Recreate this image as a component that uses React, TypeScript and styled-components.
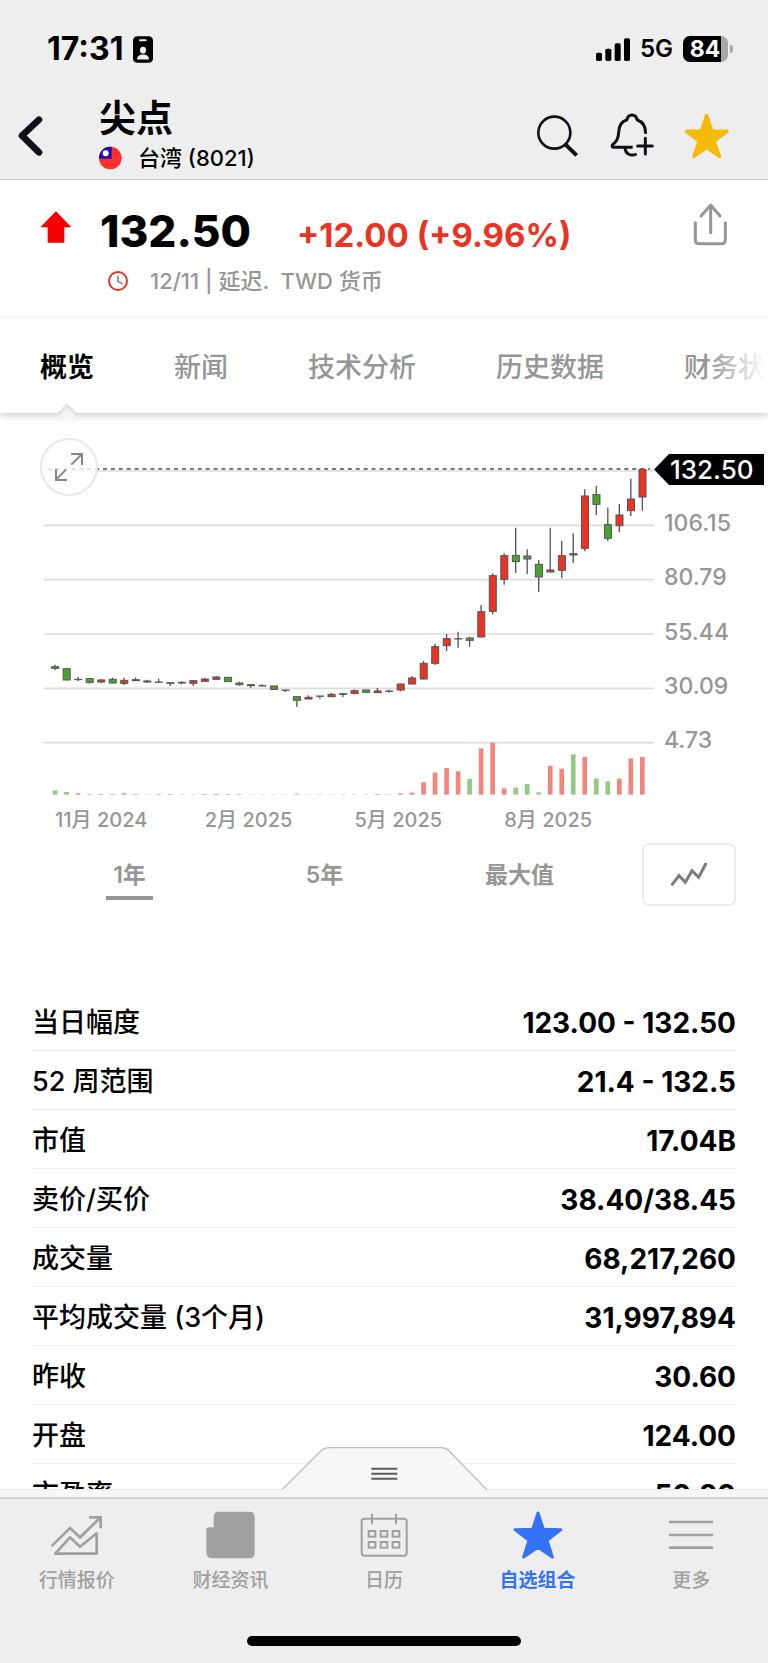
import React from 'react';
import styled, { createGlobalStyle } from 'styled-components';

const GlobalStyle = createGlobalStyle`
  *, *::before, *::after { box-sizing: border-box; }
  body {
    margin: 0;
    background: #fff;
    color: #000;
    font-family: Inter, "Noto Sans CJK SC", sans-serif;
  }
  button {
    margin: 0;
    padding: 0;
    border: 0;
    background: none;
    color: inherit;
    font: inherit;
    cursor: pointer;
  }
  svg { display: block; flex: none; }
`;

const UP = '#ea3323';
const DOWN = '#4aa32c';
const MUTED = '#969696';

const Screen = styled.div`
  display: flex;
  flex-direction: column;
  height: 100vh;
  overflow: hidden;
`;

/* ---------- header ---------- */

const Header = styled.header`
  flex: none;
  background: #eee;
  border-bottom: 1px solid #c8c8c8;
`;

const StatusBar = styled.div`
  display: flex;
  align-items: center;
  justify-content: space-between;
  height: 98px;
  padding: 0 35px 0 47px;
`;

const StatusGroup = styled.div<{ $gap: number }>`
  display: flex;
  align-items: center;
  gap: ${(p) => p.$gap}px;
`;

const Clock = styled.span`
  font-size: 32px;
  font-weight: 700;
  line-height: 36px;
`;

const Network = styled.span`
  font-size: 24px;
  font-weight: 600;
  line-height: 28px;
`;

const Battery = styled.span`
  display: flex;
  align-items: center;
  justify-content: center;
  position: relative;
  width: 45px;
  height: 26px;
  margin-right: 5px;
  padding-right: 1px;
  border-radius: 7px;
  background: linear-gradient(to right, #000 84%, #a8a8a8 84%);
  color: #fff;
  font-size: 23px;
  font-weight: 700;
  line-height: 26px;

  &::after {
    content: '';
    position: absolute;
    top: 9px;
    right: -5px;
    width: 3px;
    height: 8px;
    border-radius: 0 4px 4px 0;
    background: #a8a8a8;
  }
`;

const TitleBar = styled.div`
  display: flex;
  align-items: center;
  padding: 0 38px 6px 18px;
`;

const TitleBlock = styled.div`
  flex: 1;
  display: flex;
  flex-direction: column;
  gap: 6px;
  padding: 1px 0 2px 56px;
`;

const Title = styled.h1`
  margin: 0;
  font-size: 37px;
  font-weight: 700;
  line-height: 40px;
`;

const Subtitle = styled.div`
  display: flex;
  align-items: center;
  gap: 16px;
  font-size: 22px;
  font-weight: 500;
  line-height: 26px;
`;

const Actions = styled.div`
  display: flex;
  align-items: center;
  gap: 30px;
`;

/* ---------- quote ---------- */

const Quote = styled.section`
  flex: none;
  display: flex;
  align-items: flex-start;
  height: 138px;
  padding: 22px 40px 0;
  border-bottom: 2px solid #f5f5f5;
`;

const ArrowSlot = styled.span`
  padding-top: 9px;
`;

const QuoteText = styled.div`
  flex: 1;
  display: flex;
  flex-direction: column;
  gap: 6px;
  padding: 3px 0 0 28px;
`;

const PriceRow = styled.div`
  display: flex;
  align-items: baseline;
  gap: 46px;
  line-height: 52px;
`;

const Price = styled.strong`
  font-size: 44px;
  font-weight: 800;
`;

const Change = styled.span`
  color: ${UP};
  font-size: 33px;
  font-weight: 700;
`;

const Meta = styled.div`
  display: flex;
  align-items: center;
  gap: 22px;
  padding-left: 8px;
  color: ${MUTED};
  font-size: 22px;
  font-weight: 500;
  line-height: 28px;
  white-space: pre;
`;

/* ---------- section tabs ---------- */

const Tabs = styled.nav`
  flex: none;
  position: relative;
  z-index: 1;
  display: flex;
  gap: 80px;
  height: 95px;
  padding: 5px 0 0 40px;
  background: #fff;
  box-shadow: 0 2px 8px rgba(0, 0, 0, 0.22);
  clip-path: inset(0 0 -12px 0);
`;

const TabsFade = styled.span`
  position: absolute;
  top: 0;
  right: 0;
  width: 60px;
  height: 93px;
  background: linear-gradient(to right, rgba(255, 255, 255, 0), #fff 96%);
  pointer-events: none;
`;

const Tab = styled.button<{ $active?: boolean }>`
  flex: none;
  position: relative;
  color: ${(p) => (p.$active ? '#000' : MUTED)};
  font-size: 27px;
  font-weight: ${(p) => (p.$active ? 700 : 500)};
  line-height: 36px;
`;

const TabNotch = styled.svg`
  position: absolute;
  left: 50%;
  bottom: -6px;
  margin-left: -9px;
`;

/* ---------- chart ---------- */

const Body = styled.main`
  flex: 1;
  min-height: 0;
  overflow-y: auto;
  scrollbar-width: none;
`;

const ChartArea = styled.section`
  position: relative;
  display: grid;
  grid-template-columns: minmax(0, 1fr) 114px;
  padding-top: 25px;
`;

const Plot = styled.svg`
  width: 100%;
  height: auto;
`;

const Expand = styled.button`
  position: absolute;
  top: 25px;
  left: 40px;
  display: flex;
  align-items: center;
  justify-content: center;
  width: 58px;
  height: 58px;
  border: 2px solid #e8e8e8;
  border-radius: 50%;
  background: rgba(255, 255, 255, 0.8);
`;

const PriceAxis = styled.div`
  display: flex;
  flex-direction: column;
  justify-content: space-between;
  height: 302px;
  margin: 16px 4px 0 0;
  color: ${MUTED};
  font-size: 23px;
  font-weight: 500;
  line-height: 31px;
`;

const AxisPrice = styled.span`
  padding-left: 10px;
`;

const CurrentPrice = styled.span`
  padding-left: 16px;
  background: #000;
  color: #fff;
  font-size: 26px;
  clip-path: polygon(0 50%, 15px 0, 100% 0, 100% 100%, 15px 100%);
`;

const TimeAxis = styled.div`
  display: grid;
  grid-template-columns: repeat(4, 1fr);
  padding: 8px 114px 0 55px;
  color: ${MUTED};
  font-size: 20px;
  font-weight: 500;
  line-height: 28px;
`;

const PeriodBar = styled.div`
  display: flex;
  align-items: center;
  padding: 9px 32px 0;
`;

const Periods = styled.div`
  flex: 1;
  display: grid;
  grid-template-columns: repeat(3, 1fr);
  justify-items: center;
  padding-right: 25px;
`;

const Period = styled.button<{ $active?: boolean }>`
  padding: 7px 7px 3px;
  border-bottom: 4px solid ${(p) => (p.$active ? MUTED : 'transparent')};
  color: ${MUTED};
  font-size: 23px;
  font-weight: 600;
  line-height: 36px;
`;

const ChartType = styled.button`
  display: flex;
  align-items: center;
  justify-content: center;
  width: 94px;
  height: 63px;
  border: 2px solid #ececec;
  border-radius: 7px;
`;

/* ---------- key figures ---------- */

const Figures = styled.table`
  width: calc(100% - 64px);
  margin: 86px 32px 0;
  border-collapse: separate;
  border-spacing: 0;

  th, td {
    height: 59px;
    padding: 3px 0 0;
    border-bottom: 1px solid #efefef;
    line-height: 36px;
  }
  th { font-size: 27px; font-weight: 500; text-align: left; }
  td { font-size: 28px; font-weight: 700; text-align: right; }
`;

/* ---------- bottom ---------- */

const Drawer = styled.div`
  flex: none;
  position: relative;
  height: 8px;
  background: #f7f7f7;
  border-top: 1px solid #e6e6e6;
`;

const DrawerHandle = styled.button`
  position: absolute;
  left: 50%;
  bottom: 7px;
  margin-left: -102px;
`;

const BottomBar = styled.footer`
  flex: none;
  display: flex;
  flex-direction: column;
  align-items: center;
  justify-content: space-between;
  height: 166px;
  padding: 12px 0 17px;
  border-top: 2px solid #d2d2d2;
  background: #eee;
`;

const NavList = styled.nav`
  display: grid;
  grid-template-columns: repeat(5, 1fr);
  width: 100%;
`;

const NavLink = styled.a<{ $active?: boolean }>`
  display: flex;
  flex-direction: column;
  align-items: center;
  gap: 10px;
  color: ${(p) => (p.$active ? '#3573f6' : '#a0a0a0')};
  font-size: 19px;
  font-weight: ${(p) => (p.$active ? 700 : 500)};
  line-height: 24px;
  text-decoration: none;
`;

const NavIcon = styled.span`
  display: flex;
  align-items: center;
  height: 48px;
`;

const HomeIndicator = styled.div`
  width: 274px;
  height: 10px;
  border-radius: 5px;
  background: #000;
`;

/* ---------- chart data, in the units of the plot's view box ---------- */

type Mark = 'u' | 'd';

// [direction, body top, body bottom, wick top, wick bottom]
const candles: [Mark, number, number, number, number][] = [
  ['d', 739, 746, 734, 750],
  ['d', 745, 781, 745, 781],
  ['d', 777, 780, 771, 783],
  ['d', 775, 788, 775, 791],
  ['u', 779, 787, 777, 790],
  ['d', 777, 790, 773, 790],
  ['u', 780, 791, 773, 795],
  ['d', 778, 783, 772, 783],
  ['d', 782, 787, 779, 789],
  ['d', 785, 788, 776, 788],
  ['d', 787, 791, 787, 798],
  ['d', 786, 790, 784, 793],
  ['u', 781, 791, 781, 798],
  ['u', 776, 785, 774, 785],
  ['u', 770, 779, 768, 779],
  ['d', 771, 786, 771, 786],
  ['d', 788, 795, 785, 797],
  ['d', 793, 798, 793, 803],
  ['d', 796, 799, 793, 799],
  ['d', 797, 809, 797, 809],
  ['d', 809, 812, 809, 816],
  ['d', 829, 842, 829, 861],
  ['u', 831, 838, 826, 838],
  ['d', 827, 830, 827, 836],
  ['u', 822, 831, 819, 831],
  ['d', 820, 824, 820, 831],
  ['u', 811, 822, 808, 822],
  ['d', 809, 818, 809, 818],
  ['u', 812, 819, 804, 819],
  ['d', 812, 815, 809, 818],
  ['u', 791, 811, 791, 814],
  ['u', 773, 793, 768, 793],
  ['u', 729, 778, 723, 778],
  ['u', 679, 731, 671, 735],
  ['u', 655, 678, 642, 693],
  ['u', 655, 656, 635, 683],
  ['d', 653, 662, 650, 680],
  ['u', 574, 652, 555, 652],
  ['u', 466, 575, 460, 583],
  ['u', 406, 479, 400, 494],
  ['d', 405, 426, 323, 458],
  ['d', 407, 418, 388, 462],
  ['d', 432, 472, 421, 516],
  ['u', 449, 457, 323, 457],
  ['u', 406, 452, 363, 475],
  ['d', 400, 406, 340, 429],
  ['u', 227, 386, 208, 394],
  ['d', 223, 254, 198, 285],
  ['d', 313, 356, 263, 364],
  ['u', 284, 318, 252, 336],
  ['u', 236, 273, 176, 288],
  ['u', 147, 232, 147, 272],
];

const volumes: [Mark, number][] = [
  ['d', 13], ['d', 8], ['u', 4], ['d', 2], ['u', 2], ['d', 2], ['u', 4], ['d', 2], ['d', 1],
  ['d', 2], ['d', 2], ['u', 1], ['u', 1], ['u', 2], ['u', 2], ['d', 2], ['d', 2], ['d', 1],
  ['d', 1], ['d', 1], ['d', 1], ['d', 3], ['u', 1], ['u', 1], ['u', 1], ['u', 1], ['u', 1],
  ['d', 1], ['u', 2], ['u', 1], ['u', 4], ['u', 6], ['u', 37], ['u', 66], ['u', 80], ['u', 70],
  ['d', 47], ['u', 139], ['u', 156], ['u', 19], ['d', 21], ['d', 32], ['d', 7], ['u', 87],
  ['u', 78], ['d', 121], ['u', 113], ['d', 48], ['d', 40], ['u', 48], ['u', 109], ['u', 113],
];

const gridLines = [153, 316, 479, 642, 805, 968];
const FIRST_X = 165;
const STEP = 34.55;
const VOLUME_BASE = 1124;

const figures: [string, string][] = [
  ['当日幅度', '123.00 - 132.50'],
  ['52 周范围', '21.4 - 132.5'],
  ['市值', '17.04B'],
  ['卖价/买价', '38.40/38.45'],
  ['成交量', '68,217,260'],
  ['平均成交量 (3个月)', '31,997,894'],
  ['昨收', '30.60'],
  ['开盘', '124.00'],
  ['市盈率', '50.80'],
];

function CandlePlot() {
  return (
    <Plot viewBox="0 54 1962 1080" role="img" aria-label="一年价格走势">
      {gridLines.map((y) => (
        <line key={y} x1="131" x2="1962" y1={y} y2={y} stroke="#dcdcdc" strokeWidth="5" />
      ))}
      <line x1="143" x2="1950" y1="147" y2="147" stroke="#777" strokeWidth="6" strokeDasharray="12 11.7" />
      {volumes.map(([mark, h], i) => (
        <rect
          key={i}
          x={FIRST_X + i * STEP - 7}
          y={VOLUME_BASE - h}
          width="14"
          height={h}
          fill={mark === 'u' ? '#f4857b' : '#92c983'}
        />
      ))}
      {candles.map(([mark, top, bottom, high, low], i) => {
        const x = FIRST_X + i * STEP;
        return (
          <g key={i} stroke="#555" strokeWidth="3">
            <line x1={x} x2={x} y1={high} y2={low} strokeWidth="4" />
            <rect
              x={x - 10}
              y={top + 1}
              width="21"
              height={Math.max(1, bottom - top - 2)}
              fill={mark === 'u' ? UP : DOWN}
            />
          </g>
        );
      })}
    </Plot>
  );
}

export default function App() {
  return (
    <>
      <GlobalStyle />
      <Screen>
        <Header>
          <StatusBar>
            <StatusGroup $gap={10}>
              <Clock>17:31</Clock>
              <svg width="20" height="27" viewBox="408 108 60 80" aria-hidden="true">
                <rect x="408" y="108" width="60" height="80" rx="13" />
                <rect x="426" y="117" width="23" height="6" rx="3" fill="#eee" />
                <ellipse cx="438" cy="150" rx="9" ry="10" fill="#eee" />
                <path d="M420 178 C420 166 430 163 438 163 C446 163 456 166 456 178 Z" fill="#eee" />
              </svg>
            </StatusGroup>
            <StatusGroup $gap={10}>
              <svg width="34" height="23" viewBox="633 112 102 69" aria-hidden="true">
                <rect x="633" y="156" width="18" height="25" rx="5" />
                <rect x="661" y="144" width="18" height="37" rx="5" />
                <rect x="689" y="128" width="18" height="53" rx="5" />
                <rect x="717" y="113" width="18" height="68" rx="5" />
              </svg>
              <Network>5G</Network>
              <Battery>84</Battery>
            </StatusGroup>
          </StatusBar>
          <TitleBar>
            <button aria-label="返回">
              <svg width="25" height="42" viewBox="54 346 75 126" fill="none" stroke="#0e1118" strokeWidth="20" strokeLinecap="round" strokeLinejoin="round">
                <path d="M117 360 L66 408 L117 458" />
              </svg>
            </button>
            <TitleBlock>
              <Title>尖点</Title>
              <Subtitle>
                <svg width="23" height="24" viewBox="297 437 69 72" aria-hidden="true">
                  <clipPath id="flag"><circle cx="331" cy="473" r="34" /></clipPath>
                  <g clipPath="url(#flag)">
                    <rect x="297" y="437" width="69" height="72" fill="#ff2d2d" />
                    <rect x="297" y="437" width="38" height="38" fill="#1a0cb4" />
                    <circle cx="317" cy="459" r="9" fill="#fff" />
                  </g>
                </svg>
                台湾 (8021)
              </Subtitle>
            </TitleBlock>
            <Actions>
              <button aria-label="搜索">
                <svg width="42" height="42" viewBox="458 342 126 126" fill="none" stroke="#0e1118">
                  <circle cx="510" cy="395" r="48" strokeWidth="8" />
                  <path d="M543 430 L577 463" strokeWidth="12" />
                </svg>
              </button>
              <button aria-label="添加提醒">
                <svg width="45" height="45" viewBox="676 340 135 135" fill="none" stroke="#0e1118" strokeWidth="9" strokeLinecap="butt" strokeLinejoin="round">
                  <path d="M747 443 H689 Q684 442 686 436 C697 427 704 420 705 398 C706 378 713 365 729 361 C732 349 738 346 745 346 C752 346 758 349 761 361 C779 367 786 380 786 402" />
                  <path d="M724 445 C725 463 741 471 759 463" />
                  <path d="M785 416 V463 M762 439 H806" strokeLinecap="round" />
                </svg>
              </button>
              <button aria-label="移出自选">
                <svg width="46" height="46" viewBox="900 337 138 138" fill="#f4bb0c" stroke="#f4bb0c" strokeWidth="11" strokeLinejoin="round">
                  <path d="M968 345 L983 391 L1029 392 L990 421 L1006 467 L968 440 L930 467 L946 421 L908 392 L953 391 Z" />
                </svg>
              </button>
            </Actions>
          </TitleBar>
        </Header>

        <Quote>
          <ArrowSlot>
            <svg width="32" height="33" viewBox="118 92 96 99" fill="#f30000" role="img" aria-label="上涨">
              <path d="M166 93 L212 141 H191 V187 H141 V141 H119 Z" />
            </svg>
          </ArrowSlot>
          <QuoteText>
            <PriceRow>
              <Price>132.50</Price>
              <Change>+12.00 (+9.96%)</Change>
            </PriceRow>
            <Meta>
              <svg width="20" height="20" viewBox="324 270 60 60" fill="none" strokeWidth="6" aria-hidden="true">
                <circle cx="354" cy="300" r="27" stroke={UP} />
                <path d="M354 284 V301 L368 309" stroke="#999" />
              </svg>
              <span>12/11 | 延迟.  TWD 货币</span>
            </Meta>
          </QuoteText>
          <button aria-label="分享">
            <svg width="35" height="44" viewBox="928 66 105 132" fill="none" stroke={MUTED} strokeWidth="9" strokeLinecap="round" strokeLinejoin="round">
              <path d="M981 76 V158 M952 108 L981 75 L1009 108" />
              <path d="M935 128 V179 Q935 191 947 191 H1013 Q1025 191 1025 179 V128" />
            </svg>
          </button>
        </Quote>

        <Tabs aria-label="栏目">
          <Tab $active>
            概览
            <TabNotch width="18" height="16" viewBox="0 0 18 16" aria-hidden="true">
              <path d="M0 9 L9 0 L18 9 V16 H0 Z" fill="#e4e4e4" />
              <path d="M0 14 L9 5 L18 14 V16 H0 Z" fill="#f4f4f4" />
            </TabNotch>
          </Tab>
          <Tab>新闻</Tab>
          <Tab>技术分析</Tab>
          <Tab>历史数据</Tab>
          <Tab>财务状况</Tab>
          <TabsFade />
        </Tabs>

        <Body>
          <ChartArea>
            <CandlePlot />
            <PriceAxis>
              <CurrentPrice>132.50</CurrentPrice>
              <AxisPrice>106.15</AxisPrice>
              <AxisPrice>80.79</AxisPrice>
              <AxisPrice>55.44</AxisPrice>
              <AxisPrice>30.09</AxisPrice>
              <AxisPrice>4.73</AxisPrice>
            </PriceAxis>
            <Expand aria-label="全屏">
              <svg width="32" height="32" viewBox="159 93 96 96" fill="none" stroke="#858585" strokeWidth="6">
                <path d="M214 134 L246 102 M213 102 H246 V135 M198 149 L168 179 M168 147 V180 H201" />
              </svg>
            </Expand>
          </ChartArea>
          <TimeAxis>
            <span>11月 2024</span>
            <span>2月 2025</span>
            <span>5月 2025</span>
            <span>8月 2025</span>
          </TimeAxis>
          <PeriodBar>
            <Periods>
              <Period $active>1年</Period>
              <Period>5年</Period>
              <Period>最大值</Period>
            </Periods>
            <ChartType aria-label="图表类型">
              <svg width="38" height="25" viewBox="859 486 114 75" fill="none" stroke="#7c7c7c" strokeWidth="9" strokeLinecap="round" strokeLinejoin="miter">
                <path d="M866 553 L886 527 L905 547 L925 512 L945 532 L966 492" />
              </svg>
            </ChartType>
          </PeriodBar>

          <Figures>
            <tbody>
              {figures.map(([label, value]) => (
                <tr key={label}>
                  <th scope="row">{label}</th>
                  <td>{value}</td>
                </tr>
              ))}
            </tbody>
          </Figures>
        </Body>

        <Drawer>
          <DrawerHandle aria-label="展开">
            <svg width="205" height="43" viewBox="845 141 615 129" fill="none">
              <path d="M845 269 L962 152 Q972 143 985 143 H1322 Q1336 143 1346 152 L1459 269" fill="#f7f7f7" stroke="#bdbdbd" strokeWidth="4" />
              <path d="M1113 206 H1191 M1113 221 H1191 M1113 236 H1191" stroke="#5c5c5c" strokeWidth="6" />
            </svg>
          </DrawerHandle>
        </Drawer>

        <BottomBar>
          <NavList aria-label="主导航">
            <NavLink href="#quotes">
              <NavIcon>
                <svg width="54" height="43" viewBox="150 342 162 129" fill="none" stroke="currentColor" strokeWidth="8">
                  <path d="M157 436 L210 384 L240 412 L301 353" strokeLinecap="round" />
                  <path d="M267 352 H302 V385" />
                  <path d="M166 461 L210 412 L240 440 L290 400 V461 Z" strokeLinejoin="round" />
                </svg>
              </NavIcon>
              行情报价
            </NavLink>
            <NavLink href="#news">
              <NavIcon>
                <svg width="49" height="48" viewBox="618 332 147 144" fill="currentColor">
                  <path d="M657 334 H748 Q764 334 764 350 V458 Q764 474 748 474 H637 Q619 474 619 456 V389 Q619 381 627 381 H641 V350 Q641 334 657 334 Z" />
                </svg>
              </NavIcon>
              财经资讯
            </NavLink>
            <NavLink href="#calendar">
              <NavIcon>
                <svg width="48" height="44" viewBox="1080 339 144 132" fill="none" stroke="currentColor" strokeWidth="6">
                  <rect x="1085" y="356" width="135" height="111" rx="8" />
                  <path d="M1116 341 V373 M1188 341 V373" />
                  {[1106, 1142, 1178].map((x) => (
                    <g key={x}>
                      <rect x={x} y="393" width="20" height="17" />
                      <rect x={x} y="426" width="20" height="17" />
                    </g>
                  ))}
                </svg>
              </NavIcon>
              日历
            </NavLink>
            <NavLink href="#watchlist" $active>
              <NavIcon>
                <svg width="50" height="48" viewBox="385 329 150 144" fill="currentColor" stroke="currentColor" strokeWidth="9" strokeLinejoin="round">
                  <path d="M460 335 L476 384 L529 385 L487 417 L503 467 L460 438 L417 467 L433 417 L391 385 L444 384 Z" />
                </svg>
              </NavIcon>
              自选组合
            </NavLink>
            <NavLink href="#more">
              <NavIcon>
                <svg width="46" height="30" viewBox="851 361 138 90" stroke="currentColor" strokeWidth="8" strokeLinecap="round">
                  <path d="M857 367 H983 M857 406 H983 M857 444 H983" />
                </svg>
              </NavIcon>
              更多
            </NavLink>
          </NavList>
          <HomeIndicator />
        </BottomBar>
      </Screen>
    </>
  );
}
